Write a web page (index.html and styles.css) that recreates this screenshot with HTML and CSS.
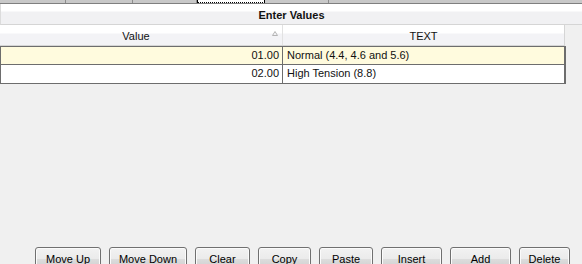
FILE: index.html
```html
<!DOCTYPE html>
<html lang="en">
  <head>
    <meta charset="UTF-8" />
    <title>Enter Values</title>
    <link rel="stylesheet" href="styles.css">
  </head>
  <body>
    <div class="tabs">
      <div class="tab tab-1"></div>
      <div class="tab tab-2"></div>
      <div class="tab tab-3"></div>
      <div class="tab tab-active"></div>
      <div class="tab tab-5"></div>
      <div class="tab tab-rest"></div>
    </div>

    <div class="title-bar">Enter Values</div>

    <div class="grid">
      <div class="grid-header">
        <div class="col col-value">
          Value
          <svg class="sort-glyph" width="6" height="5" viewBox="0 0 6 5">
            <path d="M0.5 4.5 L3 0.5 L5.5 4.5 Z" fill="none" stroke="#b4b4b4" stroke-width="1" />
          </svg>
        </div>
        <div class="col col-text">TEXT</div>
      </div>
      <div class="grid-body">
        <div class="row row-current">
          <div class="cell cell-value">01.00</div>
          <div class="cell cell-text">Normal (4.4, 4.6 and 5.6)</div>
        </div>
        <div class="row">
          <div class="cell cell-value">02.00</div>
          <div class="cell cell-text">High Tension (8.8)</div>
        </div>
      </div>
    </div>

    <div class="button-bar">
      <button class="btn btn-up">Move Up</button>
      <button class="btn btn-down">Move Down</button>
      <button class="btn btn-clear">Clear</button>
      <button class="btn btn-copy">Copy</button>
      <button class="btn btn-paste">Paste</button>
      <button class="btn btn-insert">Insert</button>
      <button class="btn btn-add">Add</button>
      <button class="btn btn-delete"><u>D</u>elete</button>
    </div>
  </body>
</html>
```

FILE: styles.css
```css
:root {
  --panel: #f0f0f0;
  --grid-line: #6d6d6d;
  --header-line: #d5d5d5;
  --current-row: #fffbde;
  --text: #111;
}

* {
  margin: 0;
  padding: 0;
  box-sizing: border-box;
}

html,
body {
  width: 582px;
  height: 264px;
  overflow: hidden;
}

body {
  font-family: "Liberation Sans", Arial, sans-serif;
  font-size: 11px;
  color: var(--text);
  background: var(--panel);
  display: flex;
  flex-direction: column;
}

/* tab strip cut at the top */
.tabs {
  display: flex;
  height: 4px;
  border-bottom: 1px solid #7f7f7f;
  background: #c8c8c8;
}

.tab {
  height: 3px;
  background: #c8c8c8;
  border-right: 1px solid #8c8c8c;
  box-shadow: inset -1px 0 0 #c8c8c8, 1px 0 0 #ececec;
}

.tab-1 { width: 66px; }
.tab-2 { width: 67px; }
.tab-3 { width: 64px; }
.tab-5 { width: 64px; }

.tab-rest {
  flex: 1;
  border-right: none;
  box-shadow: none;
}

.tab-active {
  width: 68px;
  background: #fff;
  border-left: 1px solid #000;
  border-right: 1px solid #000;
  border-bottom: 1px dotted #000;
  box-shadow: none;
}

.title-bar {
  height: 21px;
  padding-top: 5px;
  text-align: center;
  font-weight: bold;
  background: linear-gradient(#ffffff 0, #ffffff 7px, #f1f1f3 8px, #f1f1f3 100%);
  border-left: 1px solid #dcdcdc;
  border-bottom: 1px solid var(--header-line);
}

.grid {
  width: 566px;
}

.grid-header {
  display: flex;
  height: 21px;
  background: linear-gradient(#ffffff 0, #ffffff 8px, #f3f3f6 9px, #f3f3f6 100%);
  border-bottom: 1px solid var(--header-line);
  border-right: 1px solid var(--header-line);
  width: 565px;
}

.col {
  position: relative;
  padding-top: 5px;
  text-align: center;
}

.col-value {
  width: 283px;
  padding-right: 10px;
  border-right: 1px solid #e2e2e2;
}

.col-text {
  flex: 1;
}

.sort-glyph {
  position: absolute;
  top: 6px;
  right: 4px;
}

.grid-body {
  border-top: 1px solid var(--grid-line);
  border-left: 1px solid var(--grid-line);
  border-right: 2px solid var(--grid-line);
  border-bottom: 1px solid var(--grid-line);
  background: #fff;
}

.row {
  display: flex;
  height: 18px;
  border-bottom: 1px solid var(--grid-line);
}

.row:last-child {
  border-bottom: none;
}

.row-current {
  background: var(--current-row);
}

.cell {
  padding-top: 2px;
  white-space: nowrap;
}

.cell-value {
  width: 282px;
  padding-right: 3px;
  text-align: right;
  border-right: 1px solid var(--grid-line);
}

.cell-text {
  flex: 1;
  padding-left: 4px;
}

/* buttons, cut off at the bottom edge */
.button-bar {
  margin-top: auto;
  height: 17px;
  display: flex;
  gap: 8px;
  padding-left: 35px;
}

.btn {
  flex: none;
  height: 23px;
  font-family: inherit;
  font-size: 11px;
  color: #000;
  border: 1px solid #707070;
  border-radius: 3px;
  background: linear-gradient(#f2f2f2 0, #ebebeb 50%, #dddddd 51%, #cfcfcf 100%);
  box-shadow: inset 0 0 0 1px #fbfbfb;
  padding-top: 1px;
}

.btn-up { width: 66px; }
.btn-down { width: 78px; }
.btn-clear { width: 55px; }
.btn-copy { width: 53px; }
.btn-paste { width: 54px; }
.btn-insert { width: 61px; }
.btn-add { width: 61px; }
.btn-delete { width: 51px; }
```
